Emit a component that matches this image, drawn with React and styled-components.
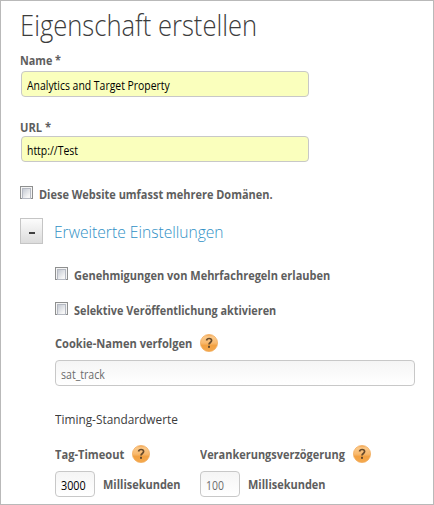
import React from 'react';
import styled, { createGlobalStyle } from 'styled-components';

const GlobalStyle = createGlobalStyle`
  * { box-sizing: border-box; }
  body { margin: 0; background: #fff; }
`;

const Panel = styled.main`
  width: 434px;
  height: 505px;
  border: 1px solid #b9b9b9;
  padding: 6px 0 0 19px;
  overflow: hidden;
  background: #fff;
  color: #5e5e5e;
  font-family: 'Open Sans', 'Noto Sans', sans-serif;
  font-size: 12px;
  line-height: 16px;
  white-space: nowrap;
`;

const Title = styled.h1`
  width: max-content;
  margin: 0 0 8px;
  height: 38px;
  font-size: 29px;
  line-height: 36px;
  font-weight: 300;
  color: #3c3c3c;
  transform: scaleX(0.882);
  transform-origin: left;
`;

const LabelBox = styled.label`
  display: block;
  flex: none;
  width: ${(p) => (p.$width ? `${p.$width}px` : 'auto')};
  height: 16px;
  padding-top: ${(p) => p.$drop ?? 1}px;
`;

const LabelText = styled.span`
  display: block;
  width: max-content;
  font-weight: 700;
  transform: scaleX(${(p) => p.$squeeze});
  transform-origin: left;
`;

function Label({ width, drop, squeeze = 0.914, children }) {
  return (
    <LabelBox $width={width} $drop={drop}>
      <LabelText $squeeze={squeeze}>{children}</LabelText>
    </LabelBox>
  );
}

const InputFrame = styled.div`
  flex: none;
  width: ${(p) => p.$width}px;
  height: 26px;
  padding: 2px 5px 0;
  border: 1px solid #c8c8c8;
  border-radius: 4px;
  background: ${(p) => (p.$required ? '#faffbd' : 'linear-gradient(#f5f5f5, #fff)')};
`;

const InputText = styled.input`
  display: block;
  width: 112%;
  height: 22px;
  margin: 0;
  padding: 0;
  border: 0;
  outline: none;
  background: transparent;
  color: #000;
  font: inherit;
  transform: scaleX(${(p) => p.$squeeze});
  transform-origin: left;
  &::placeholder { color: #6c6c6c; opacity: 1; }
`;

function Input({ width, required, squeeze = 0.87, ...rest }) {
  return (
    <InputFrame $width={width} $required={required}>
      <InputText $squeeze={squeeze} {...rest} />
    </InputFrame>
  );
}

const Field = styled.div`
  display: flex;
  flex-direction: column;
  gap: 2px;
  margin-bottom: ${(p) => p.$after}px;
  ${InputFrame} { margin-left: 1px; }
`;

const CheckRow = styled.div`
  display: flex;
  gap: 6px;
  height: 16px;
  margin-bottom: ${(p) => p.$after}px;
`;

const Checkbox = styled.span`
  width: 13px;
  height: 13px;
  border: 1px solid #8e8f8f;
  padding: 1px;
  background: #f4f4f4;
  &::before {
    content: '';
    display: block;
    height: 9px;
    border: 1px solid #b5b9c2;
    background: linear-gradient(135deg, #c5cad3, #f6f6f6 80%);
  }
`;

const SectionHead = styled.div`
  display: flex;
  gap: 11px;
  height: 26px;
  margin-bottom: 23px;
`;

const Toggle = styled.button`
  display: flex;
  align-items: center;
  justify-content: center;
  width: 23px;
  height: 26px;
  padding: 3px 0 0;
  border: 1px solid #c5c5c5;
  background: linear-gradient(#fcfcfc, #dcdcdc);
  &::before { content: ''; width: 6px; height: 2px; background: #404040; }
`;

const SectionTitle = styled.h2`
  margin: 0;
  font-size: 17px;
  line-height: 27px;
  font-weight: 300;
  color: #2f90c5;
  transform: scaleX(0.918);
  transform-origin: left;
`;

const Advanced = styled.section`
  padding-left: 35px;
`;

const LabelRow = styled.div`
  display: flex;
  align-items: center;
  gap: 8px;
  height: 18px;
  margin-bottom: 8px;
`;

const Subhead = styled.p`
  width: max-content;
  margin: 25px 0 18px;
  height: 16px;
  font-size: 13px;
  line-height: 17px;
  color: #3c3c3c;
  transform: scaleX(0.91);
  transform-origin: left;
`;

const Timings = styled.div`
  display: grid;
  grid-template-columns: 145px 200px;
`;

const UnitRow = styled.div`
  display: flex;
  align-items: center;
  gap: 8px;
`;

const HelpSvg = styled.svg`
  display: block;
  flex: none;
`;

function Help() {
  return (
    <HelpSvg width="18" height="18" viewBox="0 0 18 18" aria-label="Hilfe">
      <defs>
        <linearGradient id="orange" x1="0" y1="0" x2="0" y2="1">
          <stop offset="0" stopColor="#f3a24b" />
          <stop offset=".15" stopColor="#fbc888" />
          <stop offset=".5" stopColor="#f8b96e" />
          <stop offset=".65" stopColor="#f2a142" />
          <stop offset="1" stopColor="#f4a94e" />
        </linearGradient>
      </defs>
      <circle cx="9" cy="9" r="8.6" fill="url(#orange)" stroke="#f0a957" strokeWidth=".7" />
      <path d="M6.5 6.5C6.9 4.8 8 4.5 9.1 4.5c1.5 0 2.5.8 2.5 2.1 0 1.9-2.6 1.9-2.6 4" fill="none" stroke="#664a2b" strokeWidth="1.7" />
      <rect x="8" y="11.8" width="2" height="2" fill="#664a2b" />
    </HelpSvg>
  );
}

export default function App() {
  return (
    <>
      <GlobalStyle />
      <Panel>
        <Title>Eigenschaft erstellen</Title>
        <Field $after={21}>
          <Label squeeze={0.9} drop={0}>Name *</Label>
          <Input width={288} required squeeze={0.868} defaultValue="Analytics and Target Property" />
        </Field>
        <Field $after={24}>
          <Label squeeze={0.93} drop={2}>URL *</Label>
          <Input width={288} required defaultValue="http://Test" />
        </Field>
        <CheckRow $after={16}>
          <Checkbox />
          <Label>Diese Website umfasst mehrere Domänen.</Label>
        </CheckRow>
        <SectionHead>
          <Toggle aria-label="Einklappen" />
          <SectionTitle>Erweiterte Einstellungen</SectionTitle>
        </SectionHead>
        <Advanced>
          <CheckRow $after={19}>
            <Checkbox />
            <Label squeeze={0.917}>Genehmigungen von Mehrfachregeln erlauben</Label>
          </CheckRow>
          <CheckRow $after={16}>
            <Checkbox />
            <Label squeeze={0.904}>Selektive Veröffentlichung aktivieren</Label>
          </CheckRow>
          <LabelRow>
            <Label width={137} squeeze={0.926}>Cookie-Namen verfolgen</Label>
            <Help />
          </LabelRow>
          <Input width={360} squeeze={0.88} placeholder="sat_track" />
          <Subhead>Timing-Standardwerte</Subhead>
          <Timings>
            <div>
              <LabelRow>
                <Label width={69} squeeze={0.926}>Tag-Timeout</Label>
                <Help />
              </LabelRow>
              <UnitRow>
                <Input width={40} squeeze={0.9} defaultValue="3000" />
                <Label>Millisekunden</Label>
              </UnitRow>
            </div>
            <div>
              <LabelRow>
                <Label width={145}>Verankerungsverzögerung</Label>
                <Help />
              </LabelRow>
              <UnitRow>
                <Input width={40} placeholder="100" />
                <Label>Millisekunden</Label>
              </UnitRow>
            </div>
          </Timings>
        </Advanced>
      </Panel>
    </>
  );
}
